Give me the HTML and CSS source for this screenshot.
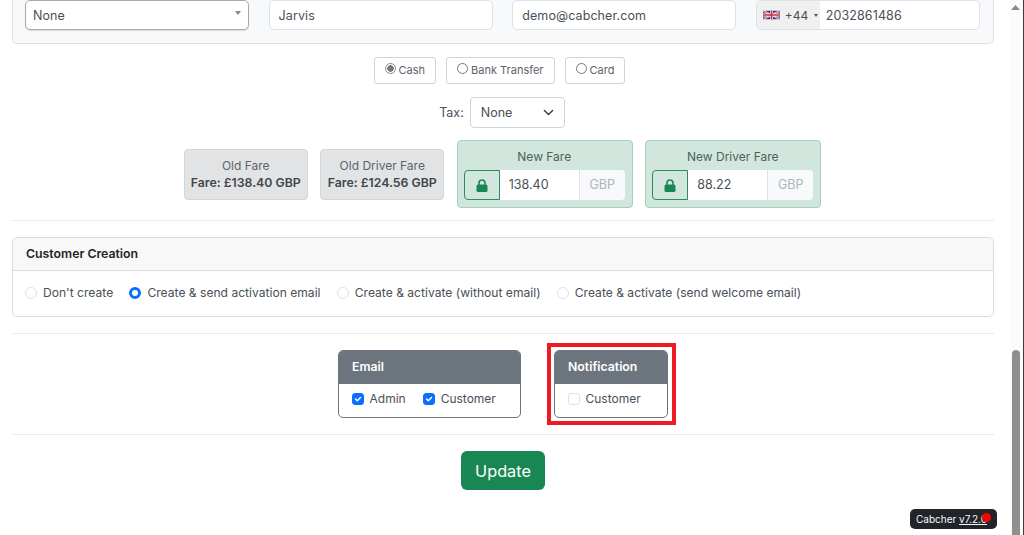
FILE: index.html
```html
<!DOCTYPE html>
<html lang="en">
<head>
<meta charset="utf-8">
<title>Edit booking</title>
<link rel="stylesheet" href="styles.css">
</head>
<body>
<div class="page">
  <main class="content">
    <section class="contact-panel">
      <div class="field select-field"><span>None</span><i class="mini-caret"></i></div>
      <div class="field">Jarvis</div>
      <div class="field">demo@cabcher.com</div>
      <div class="field phone">
        <span class="dial">
          <svg class="flag" viewBox="0 0 60 30" width="17" height="10"><rect width="60" height="30" fill="#2b3a7c"/><path d="M0 0L60 30M60 0L0 30" stroke="#fff" stroke-width="6"/><path d="M0 0L60 30M60 0L0 30" stroke="#c8283c" stroke-width="2.5"/><path d="M30 0V30M0 15H60" stroke="#fff" stroke-width="10"/><path d="M30 0V30M0 15H60" stroke="#c8283c" stroke-width="6"/></svg>
          <span>+44</span><i class="mini-caret dark"></i>
        </span>
        <span class="phone-num">2032861486</span>
      </div>
    </section>

    <div class="pay-row">
      <label class="pay-btn"><span class="native-radio checked"></span>Cash</label>
      <label class="pay-btn"><span class="native-radio"></span>Bank Transfer</label>
      <label class="pay-btn"><span class="native-radio"></span>Card</label>
    </div>

    <div class="tax-row">
      <span>Tax:</span>
      <div class="tax-select"><span>None</span>
        <svg width="11" height="11" viewBox="0 0 16 16"><path d="M2 5l6 6 6-6" fill="none" stroke="#343a40" stroke-width="2" stroke-linecap="round" stroke-linejoin="round"/></svg>
      </div>
    </div>

    <div class="fare-row">
      <div class="old-fare"><div>Old Fare</div><strong>Fare: £138.40 GBP</strong></div>
      <div class="old-fare"><div>Old Driver Fare</div><strong>Fare: £124.56 GBP</strong></div>
      <div class="new-fare">
        <div class="new-title">New Fare</div>
        <div class="fare-group">
          <span class="lock"><svg width="12" height="13" viewBox="0 0 12 13"><path d="M3 6V4a3 3 0 0 1 6 0v2" fill="none" stroke="#198754" stroke-width="1.6"/><rect x="0.5" y="5.5" width="11" height="7.5" rx="1.5" fill="#198754"/></svg></span>
          <span class="fare-value">138.40</span>
          <span class="fare-cur">GBP</span>
        </div>
      </div>
      <div class="new-fare">
        <div class="new-title">New Driver Fare</div>
        <div class="fare-group">
          <span class="lock"><svg width="12" height="13" viewBox="0 0 12 13"><path d="M3 6V4a3 3 0 0 1 6 0v2" fill="none" stroke="#198754" stroke-width="1.6"/><rect x="0.5" y="5.5" width="11" height="7.5" rx="1.5" fill="#198754"/></svg></span>
          <span class="fare-value">88.22</span>
          <span class="fare-cur">GBP</span>
        </div>
      </div>
    </div>

    <hr class="rule rule-fare">

    <section class="creation-card">
      <header class="creation-head">Customer Creation</header>
      <div class="creation-body">
        <label class="opt"><span class="radio"></span>Don't create</label>
        <label class="opt"><span class="radio on"></span>Create &amp; send activation email</label>
        <label class="opt"><span class="radio"></span>Create &amp; activate (without email)</label>
        <label class="opt"><span class="radio"></span>Create &amp; activate (send welcome email)</label>
      </div>
    </section>

    <hr class="rule rule-card">

    <div class="notify-row">
      <section class="notify-box email-box">
        <header>Email</header>
        <div class="notify-body">
          <label class="opt"><span class="check on"><svg width="10" height="10" viewBox="0 0 20 20"><path d="M5 10l3.5 3.5L15 7" fill="none" stroke="#fff" stroke-width="3" stroke-linecap="round" stroke-linejoin="round"/></svg></span>Admin</label>
          <label class="opt"><span class="check on"><svg width="10" height="10" viewBox="0 0 20 20"><path d="M5 10l3.5 3.5L15 7" fill="none" stroke="#fff" stroke-width="3" stroke-linecap="round" stroke-linejoin="round"/></svg></span>Customer</label>
        </div>
      </section>
      <div class="highlight">
        <section class="notify-box notif-box">
          <header>Notification</header>
          <div class="notify-body">
            <label class="opt"><span class="check"></span>Customer</label>
          </div>
        </section>
      </div>
    </div>

    <hr class="rule rule-notify">

    <div class="update-row"><button class="update" type="button">Update</button></div>
  </main>

  <aside class="scrollbar">
    <svg class="scroll-up" width="9" height="5" viewBox="0 0 9 5"><path d="M4.5 0l4.5 5H0z" fill="#8a8a8a"/></svg>
    <div class="thumb"></div>
  </aside>
</div>
<div class="version">Cabcher <u>v7.2.0</u><span class="dot"></span></div>
</body>
</html>
```

FILE: styles.css
```css
* { box-sizing: border-box; }
html, body { margin: 0; height: 535px; overflow: hidden; }
body {
  background: #fff;
  color: #495057;
  font-family: Inter, "Liberation Sans", sans-serif;
  font-size: 12px;
}
.page { display: flex; height: 535px; }
.content { flex: 1; min-width: 0; padding: 0 16px 0 12px; }
.scrollbar {
  width: 14px;
  background: #fbfbfb;
  border-right: 1px solid #3c3c3c;
  display: flex;
  flex-direction: column;
  padding: 5px 3px 0 1px;
}
.scroll-up { flex: none; }
.thumb { width: 8px; margin: 340px 0 0 1px; flex: 1; background: #8f8f8f; border-radius: 4px 4px 0 0; }

.contact-panel {
  height: 44px;
  background: #f8f9fa;
  border: 1px solid #dee2e6;
  border-top: 0;
  border-radius: 0 0 5px 5px;
  padding: 0 12px;
  display: grid;
  grid-template-columns: repeat(4, 224px);
  column-gap: 19.6px;
}
.field {
  height: 30px;
  background: #fff;
  border: 1px solid #dee2e6;
  border-radius: 5px;
  padding: 0 9px;
  display: flex;
  align-items: center;
  color: #495057;
  font-size: 12.5px;
  letter-spacing: .1px;
}
.select-field { padding: 0 7px; border-color: #aaa; justify-content: space-between; box-shadow: 0 1px 1px rgba(0,0,0,.12); }
.select-field .mini-caret { margin: 0 0 5px; }
.mini-caret { width: 0; height: 0; border: 3px solid transparent; border-top: 4px solid #888; border-bottom: 0; }
.mini-caret.dark { border-top-color: #555; border-width: 3px 2px 0; margin-left: 1px; }
.phone { padding: 0; overflow: hidden; }
.dial { display: flex; align-items: center; gap: 5px; height: 100%; width: 63px; padding-left: 6px; background: #f0f0f0; color: #495057; font-size: 12px; letter-spacing: 0; flex: none; }
.flag { flex: none; }
.phone-num { padding-left: 6px; font-size: 12.5px; }

.pay-row { display: flex; justify-content: center; gap: 10px; margin-top: 13px; padding-right: 7px; }
.pay-btn {
  height: 27px;
  border: 1px solid #ced4da;
  border-radius: 3px;
  display: flex;
  align-items: center;
  gap: 3px;
  padding: 0 10px 1px;
  font-size: 11px;
  color: #5c636a;
}
.native-radio { width: 11px; height: 11px; border-radius: 50%; border: 1px solid #767676; background: #fff; margin-top: -3px; }
.native-radio.checked { border-color: #888; background: radial-gradient(circle, #777 0 3px, #fff 3.5px); }

.tax-row { display: flex; justify-content: center; align-items: center; gap: 6px; margin-top: 13px; padding-right: 2px; font-size: 12.5px; }
.tax-select {
  width: 95px;
  height: 31px;
  border: 1px solid #ced4da;
  border-radius: 4px;
  display: flex;
  align-items: center;
  justify-content: space-between;
  padding: 0 10px;
  color: #495057;
}

.fare-row { display: flex; justify-content: center; align-items: center; gap: 12.5px; margin-top: 12px; height: 68px; padding-right: 1px; }
.old-fare {
  width: 124px;
  height: 51px;
  background: #e2e3e5;
  border: 1px solid #d3d6d8;
  border-radius: 4px;
  display: flex;
  flex-direction: column;
  align-items: center;
  justify-content: center;
  line-height: 17px;
  color: #5c636a;
}
.old-fare strong { color: #41464b; font-weight: 600; font-size: 12.3px; }
.new-fare {
  width: 176px;
  height: 68px;
  background: #d1e7dd;
  border: 1px solid #a3cfbb;
  border-radius: 4px;
  padding: 0 7px 0 6px;
  color: #4a6358;
  text-align: center;
}
.new-title { height: 29px; line-height: 32px; }
.fare-group { display: flex; height: 30px; font-size: 12.5px; }
.lock {
  width: 36px;
  border: 1px solid #2e8b63;
  border-radius: 4px 0 0 4px;
  display: flex;
  align-items: center;
  justify-content: center;
}
.fare-value { flex: 1; background: #fff; text-align: left; padding: 0 9px; line-height: 30px; color: #495057; }
.fare-cur { width: 46px; background: #f8f9fa; border-left: 1px solid #dee2e6; border-radius: 0 4px 4px 0; color: #adb5bd; line-height: 30px; }

.rule { border: 0; border-top: 1px solid #e9ecef; margin: 0; }
.rule-fare { margin-top: 12px; }
.rule-card { margin-top: 16px; }
.rule-notify { margin-top: 9px; }

.creation-card { margin-top: 16px; height: 80px; border: 1px solid #d9dcdf; border-radius: 5px; overflow: hidden; }
.creation-head {
  height: 33px;
  background: #f8f8f8;
  border-bottom: 1px solid #d9dcdf;
  padding-left: 13px;
  line-height: 32px;
  font-weight: 600;
  font-size: 12.3px;
  color: #212529;
}
.creation-body { display: flex; align-items: center; gap: 16.2px; height: 46px; padding: 0 0 3px 12px; font-size: 12.1px; }
.opt { display: flex; align-items: center; gap: 6px; }
.radio { width: 12px; height: 12px; border-radius: 50%; border: 1px solid #dee2e6; background: #fff; }
.radio.on { border: 3.5px solid #0d6efd; }
.check { width: 12px; height: 12px; border-radius: 3px; border: 1px solid #dee2e6; background: #fff; display: flex; align-items: center; justify-content: center; }
.check.on { background: #0d6efd; border-color: #0d6efd; }

.notify-row { display: flex; justify-content: center; align-items: center; gap: 26px; margin-top: 9px; padding-left: 8px; }
.highlight { border: 4px solid #ed1c24; padding: 3px 4px 3px 3px; }
.notify-box { height: 68px; border: 1px solid #6c757d; border-radius: 5px; overflow: hidden; background: #fff; }
.notify-box header {
  height: 33px;
  background: #6c757d;
  color: #fff;
  font-weight: 600;
  font-size: 12.3px;
  line-height: 31px;
  padding-left: 13px;
}
.notify-body { display: flex; gap: 17px; align-items: center; height: 33px; padding: 0 0 4px 12.5px; }
.email-box { width: 183px; }
.notif-box { width: 114px; }

.update-row { display: flex; justify-content: center; margin-top: 16px; }
.update {
  width: 84px;
  height: 39px;
  background: #198754;
  color: #fff;
  border: 0;
  border-radius: 6px;
  font: 400 16.3px Inter, "Liberation Sans", sans-serif;
}

.version {
  position: absolute;
  left: 910px;
  top: 509px;
  width: 87px;
  height: 20px;
  background: #212529;
  border-radius: 5px;
  color: #f8f9fa;
  font-size: 10px;
  line-height: 20px;
  padding-left: 6px;
  white-space: nowrap;
}
.dot { position: absolute; left: 72px; top: 4px; width: 9px; height: 9px; border-radius: 50%; background: #f00; }
```
